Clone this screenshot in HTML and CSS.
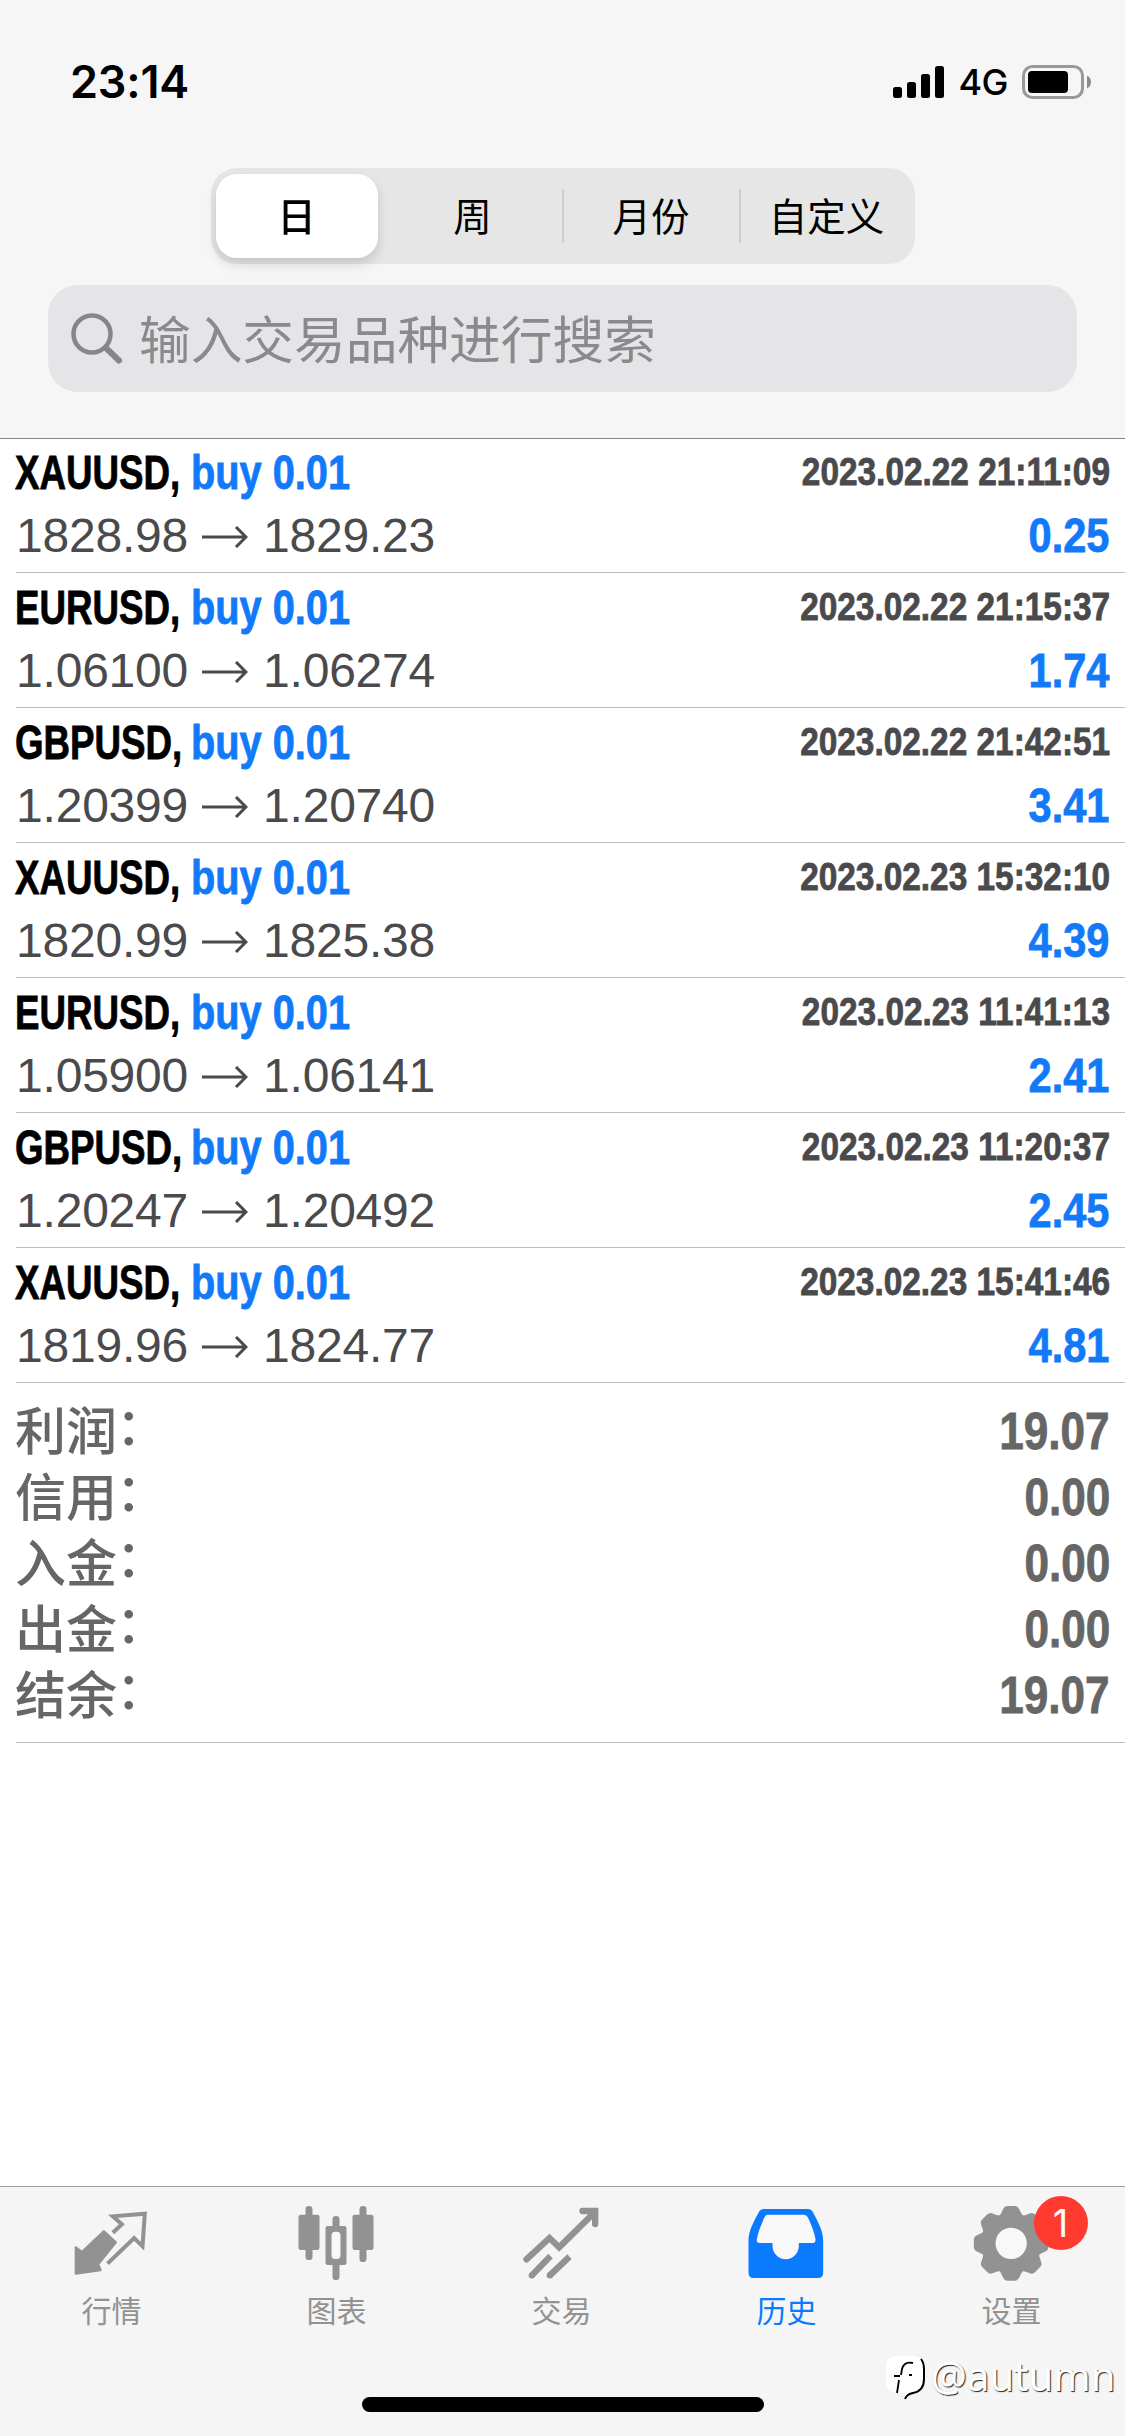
FILE: index.html
```html
<!DOCTYPE html>
<html lang="zh-CN">
<head>
<meta charset="utf-8">
<title>历史</title>
<link rel="stylesheet" href="styles.css">
</head>
<body>
<div class="screen">
  <header class="header">
    <div class="status">
      <span class="clock">23:14</span>
      <div class="indicators">
        <svg class="signal" width="51" height="32" viewBox="0 0 51 32"><rect y="21" width="9" height="11" rx="2.5"/><rect x="14" y="16" width="9" height="16" rx="2.5"/><rect x="28" y="8" width="9" height="24" rx="2.5"/><rect x="42" width="9" height="32" rx="2.5"/></svg>
        <span class="network">4G</span>
        <svg class="battery" width="70" height="34" viewBox="0 0 70 34"><rect x="1.5" y="1.5" width="59" height="31" rx="9" fill="none" stroke="#999" stroke-width="3"/><rect x="6" y="6" width="40" height="22" rx="4"/><path d="M65 10.5q4 2 4 6.500t-4 6.500z" fill="#8c8c8c"/></svg>
      </div>
    </div>
    <nav class="segments">
      <span class="segment selected">日</span>
      <span class="segment week">周</span>
      <span class="segment divided month">月份</span>
      <span class="segment divided">自定义</span>
    </nav>
    <div class="search">
      <svg width="52" height="52" viewBox="0 0 52 52" fill="none" stroke="#868688" stroke-linecap="round"><circle cx="21" cy="21" r="18.500" stroke-width="4.500"/><path d="M35 35L48 47.500" stroke-width="6"/></svg>
      <span>输入交易品种进行搜索</span>
    </div>
  </header>

  <main class="list">
    <article class="deal"><div class="line"><div class="title"><b class="symbol">XAUUSD,</b><b class="side">buy 0.01</b></div><time class="date">2023.02.22 21:11:09</time></div><div class="line"><div class="prices"><span class="open">1828.98</span><svg class="arrow" viewBox="0 0 46 22"><path d="M0 11H44M34 1L44 11L34 21"/></svg><span>1829.23</span></div><b class="profit">0.25</b></div></article>
    <article class="deal"><div class="line"><div class="title"><b class="symbol">EURUSD,</b><b class="side">buy 0.01</b></div><time class="date">2023.02.22 21:15:37</time></div><div class="line"><div class="prices"><span class="open">1.06100</span><svg class="arrow" viewBox="0 0 46 22"><path d="M0 11H44M34 1L44 11L34 21"/></svg><span>1.06274</span></div><b class="profit">1.74</b></div></article>
    <article class="deal"><div class="line"><div class="title"><b class="symbol">GBPUSD,</b><b class="side">buy 0.01</b></div><time class="date">2023.02.22 21:42:51</time></div><div class="line"><div class="prices"><span class="open">1.20399</span><svg class="arrow" viewBox="0 0 46 22"><path d="M0 11H44M34 1L44 11L34 21"/></svg><span>1.20740</span></div><b class="profit">3.41</b></div></article>
    <article class="deal"><div class="line"><div class="title"><b class="symbol">XAUUSD,</b><b class="side">buy 0.01</b></div><time class="date">2023.02.23 15:32:10</time></div><div class="line"><div class="prices"><span class="open">1820.99</span><svg class="arrow" viewBox="0 0 46 22"><path d="M0 11H44M34 1L44 11L34 21"/></svg><span>1825.38</span></div><b class="profit">4.39</b></div></article>
    <article class="deal"><div class="line"><div class="title"><b class="symbol">EURUSD,</b><b class="side">buy 0.01</b></div><time class="date">2023.02.23 11:41:13</time></div><div class="line"><div class="prices"><span class="open">1.05900</span><svg class="arrow" viewBox="0 0 46 22"><path d="M0 11H44M34 1L44 11L34 21"/></svg><span>1.06141</span></div><b class="profit">2.41</b></div></article>
    <article class="deal"><div class="line"><div class="title"><b class="symbol">GBPUSD,</b><b class="side">buy 0.01</b></div><time class="date">2023.02.23 11:20:37</time></div><div class="line"><div class="prices"><span class="open">1.20247</span><svg class="arrow" viewBox="0 0 46 22"><path d="M0 11H44M34 1L44 11L34 21"/></svg><span>1.20492</span></div><b class="profit">2.45</b></div></article>
    <article class="deal"><div class="line"><div class="title"><b class="symbol">XAUUSD,</b><b class="side">buy 0.01</b></div><time class="date">2023.02.23 15:41:46</time></div><div class="line"><div class="prices"><span class="open">1819.96</span><svg class="arrow" viewBox="0 0 46 22"><path d="M0 11H44M34 1L44 11L34 21"/></svg><span>1824.77</span></div><b class="profit">4.81</b></div></article>
    <section class="summary">
      <div class="total"><span>利润<i>：</i></span><b>19.07</b></div>
      <div class="total"><span>信用<i>：</i></span><b>0.00</b></div>
      <div class="total"><span>入金<i>：</i></span><b>0.00</b></div>
      <div class="total"><span>出金<i>：</i></span><b>0.00</b></div>
      <div class="total"><span>结余<i>：</i></span><b>19.07</b></div>
    </section>
  </main>

  <footer class="tabbar">
    <div class="tabs">
      <div class="tab">
        <svg viewBox="91.5 90 252 252"><path d="M193 184L229 217L176 283L183 300L109 311L109 232L127 246Z" fill="currentColor" stroke="currentColor" stroke-width="7" stroke-linejoin="round"/><path d="M220 188L247 163L220 139L316 131L309 229L284 204L204 281" fill="none" stroke="currentColor" stroke-width="12"/></svg>
        <span>行情</span>
      </div>
      <div class="tab">
        <svg viewBox="766.5 90 252 252" fill="currentColor"><rect x="798" y="108" width="21" height="162" rx="10"/><rect x="777" y="134" width="63" height="106" rx="7"/><rect x="960" y="108" width="21" height="168" rx="10"/><rect x="939" y="134" width="63" height="106" rx="7"/><rect x="879" y="138" width="21" height="192" rx="10"/><rect x="858" y="168" width="63" height="117" rx="7"/><rect x="876" y="185" width="27" height="82" rx="11" fill="#f8f8f8"/></svg>
        <span>图表</span>
      </div>
      <div class="tab">
        <svg viewBox="121.500 90 252 252" fill="none" stroke="currentColor" stroke-width="19"><path d="M141 268L210 204L239 232L347 125M309 123H347V162" stroke-linecap="round" stroke-linejoin="miter"/><path d="M157 316L213 258M211 316L270 260"/><g fill="currentColor" stroke="none"><circle cx="157" cy="316" r="9.500"/><circle cx="211" cy="316" r="9.500"/></g></svg>
        <span>交易</span>
      </div>
      <div class="tab active">
        <svg viewBox="796.5 90 252 252"><path d="M854 117H985Q995 117 1000 126C1014 153 1031 182 1031 212V308Q1031 324 1015 324H823Q807 324 807 308V212C807 182 824 153 838 126Q843 117 854 117Z" fill="currentColor"/><path d="M864 134H973Q981 134 985 142C993 160 1004 184 1008 208Q1009 219 998 219H958V227A39 40 0 0 1 879 227V219H841Q830 219 832 208C836 184 847 160 855 142Q858 134 864 134Z" fill="#f8f8f8"/></svg>
        <span>历史</span>
      </div>
      <div class="tab">
        <div class="icon-wrap">
          <svg viewBox="331.5 90 252 252" fill="currentColor"><defs><path id="tooth" d="M415 142Q424 135 430 119Q434 108 445 108H465Q476 108 480 119Q486 135 495 142L455 190Z"/></defs><circle cx="455" cy="220" r="87"/><use href="#tooth"/><use href="#tooth" transform="rotate(45 455 220)"/><use href="#tooth" transform="rotate(90 455 220)"/><use href="#tooth" transform="rotate(135 455 220)"/><use href="#tooth" transform="rotate(180 455 220)"/><use href="#tooth" transform="rotate(225 455 220)"/><use href="#tooth" transform="rotate(270 455 220)"/><use href="#tooth" transform="rotate(315 455 220)"/><circle cx="455" cy="220" r="47" fill="#f8f8f8"/></svg>
          <i class="badge">1</i>
        </div>
        <span>设置</span>
      </div>
    </div>
    <div class="home"></div>
    <div class="watermark">
      <svg width="46" height="48" viewBox="0 0 46 48"><path d="M12 1H28Q39 1 39 15V24Q39 37 27 38L20 44V38H12Q1 38 1 26V13Q1 1 12 1Z" fill="#fff"/><path d="M20 44Q22 39 28 38Q39 36 39 24V14Q39 8 36 4" fill="none" stroke="#000" stroke-width="2"/><path d="M28 8Q19 6 17 14L16 20M9 21H15M14 25L12 38M24 20h3" fill="none" stroke="#000" stroke-width="1.800"/></svg>
      <span>@autumn</span>
    </div>
  </footer>
</div>
</body>
</html>
```
FILE: styles.css
```css
* { box-sizing: border-box; }

body {
  margin: 0;
  background: #fff;
  font-family: "Liberation Sans", "Noto Sans CJK SC", sans-serif;
}

.screen {
  display: flex;
  flex-direction: column;
  width: 1125px;
  height: 2436px;
  overflow: hidden;
}

.header {
  height: 439px;
  flex: none;
  padding: 0 48px;
  background: #f6f6f6;
  border-bottom: 1px solid #858585;
}

.status {
  display: flex;
  justify-content: space-between;
  align-items: center;
  height: 168px;
  padding: 0 0 4px 22px;
}

.clock {
  font: 600 45px/60px Inter, sans-serif;
  letter-spacing: -.2px;
}

.indicators {
  display: flex;
  align-items: center;
  margin-right: -15px;
}

.network {
  margin: 0 14px;
  font: 500 36px/40px Inter, sans-serif;
  letter-spacing: -.5px;
}

.segments {
  display: flex;
  width: 704px;
  height: 96px;
  margin: 0 auto;
  padding: 6px 0 6px 5px;
  background: #e6e6e6;
  border-radius: 26px;
}

.segment {
  display: flex;
  flex: 1;
  align-items: center;
  justify-content: center;
  padding-bottom: 4px;
  font: 400 38.5px/54px "Noto Sans CJK SC", sans-serif;
}

.selected {
  flex: 0 0 162px;
  font-weight: 500;
  background: #fff;
  border-radius: 21px;
  box-shadow: 0 6px 12px rgba(0, 0, 0, .14);
}

.week { flex: 0 0 184px; padding-left: 6px; }
.month { flex: 0 0 177px; padding-left: 2px; }

.divided {
  background: linear-gradient(#cfcfcf, #cfcfcf) 0 50% / 2px 54px no-repeat;
}

.search {
  display: flex;
  align-items: center;
  gap: 16px;
  height: 107px;
  margin-top: 21px;
  padding-left: 23px;
  color: #8a8a8c;
  background: #e5e5e7;
  border-radius: 30px;
  font: 400 51.7px/76px "Noto Sans CJK SC", sans-serif;
}

.search span { margin-top: -4px; }

.list { flex: 1; padding-left: 16px; }

.deal {
  height: 135px;
  padding: 7px 15px 0 0;
  border-bottom: 1px solid #bcbcbe;
}

.deal:first-child { height: 134px; padding-top: 6px; }

.line {
  display: flex;
  justify-content: space-between;
  height: 63px;
  line-height: 56px;
  font-size: 48px;
}

/* Condensed look is made from the regular-width bold face */
.title, .prices { display: flex; white-space: pre; }

.title, .date, .profit, .total b { -webkit-text-stroke: .8px currentColor; }

.symbol, .side { transform-origin: 0 0; }
.symbol { width: 176px; transform: translateX(-1px) scaleX(.765); }
.side { color: #127af8; transform: translateX(-1px) scaleX(.828); }

.date {
  color: #4a4a4d;
  font-size: 39px;
  font-weight: 700;
  line-height: 54px;
  transform: scaleX(.856);
  transform-origin: 100% 0;
}

.profit {
  color: #127af8;
  transform: translateX(-1px) scaleX(.865);
  transform-origin: 100% 0;
}

.prices { color: #4a4a4c; letter-spacing: -.2px; }
.open { width: 186px; }

.arrow {
  width: 46px;
  height: 22px;
  margin: 18px 15px 0 0;
  fill: none;
  stroke: #4a4a4c;
  stroke-width: 3;
}

.summary {
  height: 360px;
  padding: 13px 15px 0 0;
  border-bottom: 1px solid #bcbcbe;
}

.total {
  display: flex;
  justify-content: space-between;
  height: 66px;
  color: #666;
  font: 500 51px/66px "Noto Sans CJK SC", sans-serif;
}

.total span { margin: -1px 0 0 -1px; }

.total i {
  display: inline-block;
  font-style: normal;
  transform: translate(-1px, -5px);
}

.total b {
  font: 700 51px/72px "Liberation Sans", sans-serif;
  transform: scaleX(.865);
  transform-origin: 100% 0;
}

.tabbar {
  position: relative;
  flex: none;
  height: 250px;
  background: #f5f5f5;
  border-top: 1px solid #a0a0a0;
}

.tabs { display: flex; }

.tab {
  display: flex;
  flex: 1;
  flex-direction: column;
  align-items: center;
  padding: 13px 2px 0 0;
  color: #929292;
  font: 400 30px/44px "Noto Sans CJK SC", sans-serif;
}

.tab svg { display: block; width: 84px; height: 84px; }
.tab > span { margin-top: 3px; }
.active { color: #0a7aff; }
.icon-wrap { position: relative; }

.badge {
  position: absolute;
  left: 64px;
  top: -4px;
  width: 54px;
  height: 54px;
  border-radius: 50%;
  background: #ff3b30;
  color: #fff;
  font: 400 38px/54px Inter, sans-serif;
  text-align: center;
}

.home {
  width: 402px;
  height: 15px;
  margin: 66px auto 0;
  border-radius: 8px;
  background: #000;
}

.watermark {
  position: absolute;
  left: 885px;
  top: 168px;
  display: flex;
  align-items: flex-start;
  color: #fff;
  font: 400 40px/44px "Noto Sans", sans-serif;
  text-shadow: 1px 1px 1px #222;
}

.watermark span { margin-top: -1px; }
```
